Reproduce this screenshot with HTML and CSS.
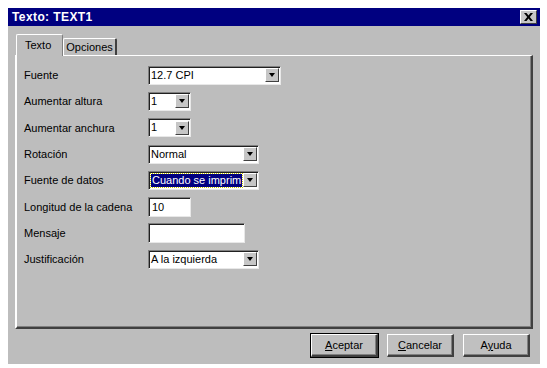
FILE: index.html
```html
<!DOCTYPE html>
<html>
  <head>
    <title>Texto: TEXT1</title>
    <link rel="stylesheet" href="styles.css">
  </head>
  <body>
    <div class="window">
      <div class="title-bar">
        <span class="title-text">Texto: TEXT1</span>
        <div class="close-button">
          <svg width="9" height="8" viewBox="0 0 9 8">
            <path d="M0 0h2.5l2 2.6L6.5 0H9L5.8 4 9 8H6.5l-2-2.6L2.5 8H0l3.2-4z" fill="black"/>
          </svg>
        </div>
      </div>

      <div class="dialog-body">
        <div class="tab-strip">
          <div class="tab tab-active">Texto</div>
          <div class="tab">Opciones</div>
        </div>

        <div class="panel">
          <div class="form-grid">
            <div class="label">Fuente</div>
            <div class="combo combo-wide">
              <span class="combo-text">12.7 CPI</span>
              <span class="combo-arrow"></span>
            </div>

            <div class="label">Aumentar altura</div>
            <div class="combo combo-small">
              <span class="combo-text">1</span>
              <span class="combo-arrow"></span>
            </div>

            <div class="label">Aumentar anchura</div>
            <div class="combo combo-small">
              <span class="combo-text">1</span>
              <span class="combo-arrow"></span>
            </div>

            <div class="label">Rotación</div>
            <div class="combo combo-medium">
              <span class="combo-text">Normal</span>
              <span class="combo-arrow"></span>
            </div>

            <div class="label">Fuente de datos</div>
            <div class="combo combo-medium">
              <span class="combo-text"><span class="combo-selected">Cuando se imprim</span></span>
              <span class="combo-arrow"></span>
            </div>

            <div class="label">Longitud de la cadena</div>
            <div class="textbox textbox-small">10</div>

            <div class="label">Mensaje</div>
            <div class="textbox textbox-wide"></div>

            <div class="label">Justificación</div>
            <div class="combo combo-medium">
              <span class="combo-text">A la izquierda</span>
              <span class="combo-arrow"></span>
            </div>
          </div>
        </div>

        <div class="button-row">
          <button class="button button-default"><u>A</u>ceptar</button>
          <button class="button"><u>C</u>ancelar</button>
          <button class="button">A<u>y</u>uda</button>
        </div>
      </div>
    </div>
  </body>
</html>
```

FILE: styles.css
```css
body {
  margin: 0;
  background-color: white;
  font-family: "Liberation Sans", Arial, sans-serif;
  font-size: 11px;
  color: black;
}

.window {
  margin: 8px 0 0 8px;
  width: 532px;
  height: 356px;
  background-color: #bdbdbd;
  display: flex;
  flex-direction: column;
}

.title-bar {
  height: 18px;
  background-color: #000080;
  display: flex;
  align-items: center;
  justify-content: space-between;
  padding: 0 3px 0 4px;
}

.title-text {
  color: white;
  font-weight: bold;
  font-size: 12px;
  letter-spacing: 0.4px;
}

.close-button {
  width: 15px;
  height: 12px;
  background-color: #c6c6c6;
  border-top: 1px solid white;
  border-left: 1px solid white;
  border-right: 1px solid #404040;
  border-bottom: 1px solid #404040;
  display: flex;
  align-items: center;
  justify-content: center;
}

.dialog-body {
  padding: 8px 7px 0 7px;
  display: flex;
  flex-direction: column;
}

.tab-strip {
  display: flex;
  height: 21px;
  padding-left: 1px;
  position: relative;
  z-index: 1;
}

.tab {
  margin-top: 4px;
  height: 16px;
  padding: 0 2px;
  line-height: 16px;
  border-top: 1px solid white;
  border-left: 1px solid white;
  border-right: 2px solid #404040;
  border-top-left-radius: 2px;
  border-top-right-radius: 2px;
  background-color: #bdbdbd;
}

.tab-active {
  margin-top: 0;
  height: 21px;
  line-height: 20px;
  padding: 0 11px 0 8px;
  border-right: 1px solid #808080;
}

.panel {
  height: 265px;
  border-top: 1px solid white;
  border-left: 2px solid white;
  border-right: 2px solid #404040;
  border-bottom: 2px solid #404040;
  box-shadow: inset -1px -1px 0 #808080;
  padding: 6px 0 0 7px;
}

.form-grid {
  display: grid;
  grid-template-columns: 124px auto;
  grid-auto-rows: 26.3px;
  align-items: center;
  justify-items: start;
}

.combo,
.textbox {
  height: 19px;
  box-sizing: border-box;
  background-color: white;
  border-top: 1px solid #808080;
  border-left: 1px solid #808080;
  border-right: 1px solid #e8e8e8;
  border-bottom: 1px solid #e8e8e8;
  box-shadow: inset 1px 1px 0 #202020;
  display: flex;
  align-items: center;
}

.combo-wide {
  width: 133px;
}

.combo-small {
  width: 43px;
}

.combo-medium {
  width: 111px;
}

.combo-text {
  flex: 1;
  padding-left: 2px;
  white-space: nowrap;
  line-height: 13px;
}

.combo-selected {
  display: block;
  margin-right: 1px;
  padding-left: 1px;
  background-color: #000080;
  color: white;
  outline: 1px dotted #c8c800;
}

.combo-arrow {
  width: 14px;
  height: 14px;
  margin-right: 1px;
  background-color: #c6c6c6;
  border-top: 1px solid white;
  border-left: 1px solid white;
  border-right: 1px solid #404040;
  border-bottom: 1px solid #404040;
  box-sizing: border-box;
  position: relative;
}

.combo-arrow::after {
  content: "";
  position: absolute;
  left: 3px;
  top: 4px;
  border-left: 3.5px solid transparent;
  border-right: 3.5px solid transparent;
  border-top: 4px solid black;
}

.textbox {
  padding-left: 3px;
  height: 20px;
}

.textbox-small {
  width: 43px;
}

.textbox-wide {
  width: 97px;
}

.button-row {
  display: flex;
  justify-content: flex-end;
  gap: 9px;
  padding: 5px 3px 0 0;
}

.button {
  width: 67px;
  height: 23px;
  background-color: #c0c0c0;
  font-family: "Liberation Sans", Arial, sans-serif;
  font-size: 11px;
  color: black;
  padding: 0;
  border-top: 1px solid white;
  border-left: 1px solid white;
  border-right: 2px solid #404040;
  border-bottom: 2px solid #404040;
  box-shadow: inset -1px -1px 0 #808080;
}

.button-default {
  outline: 1px solid black;
}
```
